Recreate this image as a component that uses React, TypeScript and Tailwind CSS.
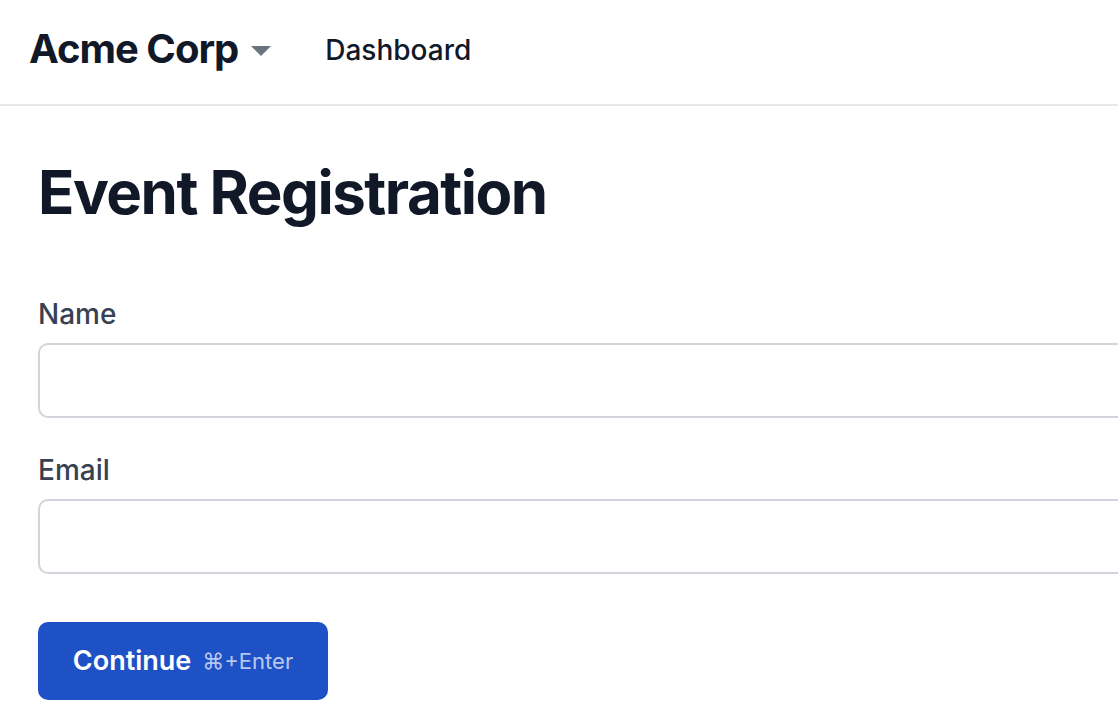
export default function App() {
  return (
    <div className="w-[1118px] h-[726px] overflow-hidden bg-white text-[#111827]" style={{ fontFamily: "Inter, 'Noto Sans', sans-serif" }}>
      <header className="h-[106px] border-b-2 border-[#e5e7eb] flex items-center pl-[29px] pb-[4px]">
        <div className="flex items-center">
          <span className="text-[40px] font-bold leading-none tracking-[-1px] -mt-[3px]">Acme Corp</span>
          <svg className="ml-[13px] mt-[2px]" width="20" height="10" viewBox="0 0 20 10">
            <path d="M0 0 L20 0 L10 10 Z" fill="#6b7280" />
          </svg>
        </div>
        <span className="ml-[54px] text-[28px] font-medium leading-none">Dashboard</span>
      </header>
      <main className="pl-[38px] w-[1300px]">
        <h1 className="mt-[56px] text-[60px] font-bold leading-none tracking-[-1.5px]">Event Registration</h1>
        <form className="mt-[78px]">
          <label className="block text-[28px] font-medium leading-none text-[#374151]">Name</label>
          <div className="mt-[15px] h-[75px] rounded-[10px] border-2 border-[#d1d5db]" />
          <label className="block mt-[38px] text-[28px] font-medium leading-none text-[#374151]">Email</label>
          <div className="mt-[15px] h-[75px] rounded-[10px] border-2 border-[#d1d5db]" />
          <button type="button" className="mt-[48px] w-[290px] h-[78px] rounded-[10px] bg-[#1e50c6] flex items-center justify-center gap-[11px] text-white">
            <span className="text-[27px] font-semibold">Continue</span>
            <span className="text-[22px] text-white/70">⌘+Enter</span>
          </button>
        </form>
      </main>
    </div>
  );
}
